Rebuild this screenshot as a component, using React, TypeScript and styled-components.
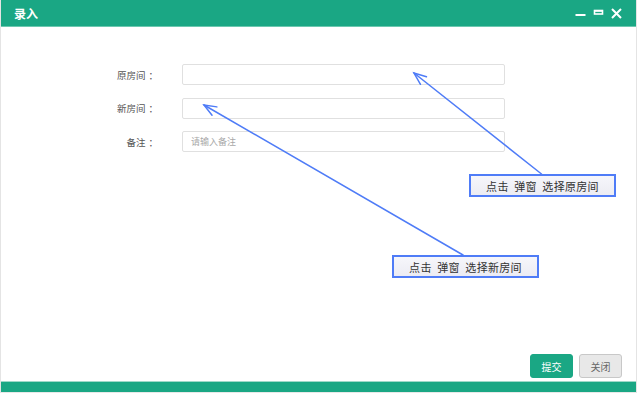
import React from "react";
import styled, { createGlobalStyle } from "styled-components";

const GREEN = "#1aa784";
const BLUE = "#4f7cf7";

const Global = createGlobalStyle`
  html, body { margin: 0; padding: 0; background: #fff; }
  body { font-family: "Noto Sans CJK SC", "Noto Sans", sans-serif; }
  * { box-sizing: border-box; }
`;

const Window = styled.div`
  position: relative;
  width: 637px;
  height: 393px;
  display: flex;
  flex-direction: column;
  background: #fff;
  border-left: 1px solid #e4e4e4;
  border-right: 1px solid #e4e4e4;
`;

const Header = styled.div`
  height: 27px;
  background: ${GREEN};
  display: flex;
  align-items: center;
  justify-content: space-between;
  padding: 0 14px 0 13px;
  border-bottom: 1px solid #6cc8b0;
`;

const Title = styled.div`
  color: #fff;
  font-size: 12px;
  font-weight: bold;
`;

const Tools = styled.div`
  display: flex;
  align-items: center;
  gap: 7px;
`;

const ToolIcon = styled.svg`
  display: block;
  width: 11px;
  height: 11px;
`;

const Body = styled.div`
  flex: 1;
  padding-top: 37px;
  display: flex;
  flex-direction: column;
`;

const FormRow = styled.div`
  display: grid;
  grid-template-columns: 157px 323px;
  column-gap: 24px;
  align-items: center;
  height: 21px;
  margin-bottom: 12.5px;
`;

const Label = styled.label`
  text-align: right;
  font-size: 9.5px;
  color: #555;
`;

const Colon = styled.span`
  padding-left: 3px;
`;

const Input = styled.input`
  height: 21px;
  width: 323px;
  border: 1px solid #e0e0e0;
  border-radius: 2px;
  padding: 0 8px;
  font-size: 9px;
  font-family: "Noto Sans CJK SC", sans-serif;
  color: #333;
  outline: none;
  &::placeholder { color: #a8a8a8; }
`;

const Footer = styled.div`
  margin-top: auto;
  display: flex;
  justify-content: flex-end;
  gap: 6px;
  padding: 0 14px 3px 0;
`;

const Button = styled.button<{ $primary?: boolean }>`
  width: 43px;
  height: 24px;
  border-radius: 3px;
  font-size: 10px;
  font-family: "Noto Sans CJK SC", sans-serif;
  cursor: pointer;
  padding: 0;
  background: ${(p) => (p.$primary ? GREEN : "#e8e8e8")};
  color: ${(p) => (p.$primary ? "#fff" : "#666")};
  border: 1px solid ${(p) => (p.$primary ? GREEN : "#c8c8c8")};
`;

const BottomBar = styled.div`
  height: 12px;
  background: ${GREEN};
  border-top: 1px solid #9fd9c9;
  border-bottom: 1px solid #e8e8e8;
`;

const Overlay = styled.svg`
  position: absolute;
  left: -1px;
  top: 0;
  width: 637px;
  height: 393px;
  pointer-events: none;
`;

const Callout = styled.div<{ $x: number; $y: number; $w: number }>`
  position: absolute;
  left: ${(p) => p.$x}px;
  top: ${(p) => p.$y}px;
  width: ${(p) => p.$w}px;
  height: 23px;
  border: 2px solid ${BLUE};
  background: linear-gradient(#f6f6fb, #ececf3);
  color: #333;
  font-size: 11px;
  letter-spacing: 0.3px;
  display: flex;
  align-items: center;
  justify-content: center;
  white-space: pre;
`;

function Arrow({ x1, y1, x2, y2 }: { x1: number; y1: number; x2: number; y2: number }) {
  const ang = Math.atan2(y1 - y2, x1 - x2);
  const len = 13;
  const spread = 0.38;
  const a = [x2 + len * Math.cos(ang + spread), y2 + len * Math.sin(ang + spread)];
  const b = [x2 + len * Math.cos(ang - spread), y2 + len * Math.sin(ang - spread)];
  return (
    <g stroke={BLUE} strokeWidth={1.5} fill="none" strokeLinecap="round">
      <line x1={x1} y1={y1} x2={x2} y2={y2} />
      <polyline points={`${a[0]},${a[1]} ${x2},${y2} ${b[0]},${b[1]}`} />
    </g>
  );
}

export default function App() {
  return (
    <>
      <Global />
      <Window>
        <Header>
          <Title>录入</Title>
          <Tools>
            <ToolIcon viewBox="0 0 11 11">
              <rect x="0.5" y="6" width="10" height="2" fill="#fff" />
            </ToolIcon>
            <ToolIcon viewBox="0 0 11 11">
              <rect x="1.5" y="2.5" width="8" height="3.5" fill="none" stroke="#fff" strokeWidth="1.6" />
              <rect x="1" y="2" width="9" height="1.8" fill="#fff" />
            </ToolIcon>
            <ToolIcon viewBox="0 0 11 11">
              <path d="M1 1 L10 10 M10 1 L1 10" stroke="#fff" strokeWidth="2" />
            </ToolIcon>
          </Tools>
        </Header>
        <Body>
          <FormRow>
            <Label>原房间<Colon>：</Colon></Label>
            <Input />
          </FormRow>
          <FormRow>
            <Label>新房间<Colon>：</Colon></Label>
            <Input />
          </FormRow>
          <FormRow>
            <Label>备注<Colon>：</Colon></Label>
            <Input placeholder="请输入备注" />
          </FormRow>
          <Footer>
            <Button $primary>提交</Button>
            <Button>关闭</Button>
          </Footer>
        </Body>
        <BottomBar />
        <Callout $x={468} $y={174} $w={147}>点击  弹窗  选择原房间</Callout>
        <Callout $x={391} $y={255} $w={147}>点击  弹窗  选择新房间</Callout>
        <Overlay viewBox="0 0 637 393">
          <Arrow x1={541.5} y1={174} x2={414} y2={73} />
          <Arrow x1={463} y1={255} x2={204} y2={105} />
        </Overlay>
      </Window>
    </>
  );
}
